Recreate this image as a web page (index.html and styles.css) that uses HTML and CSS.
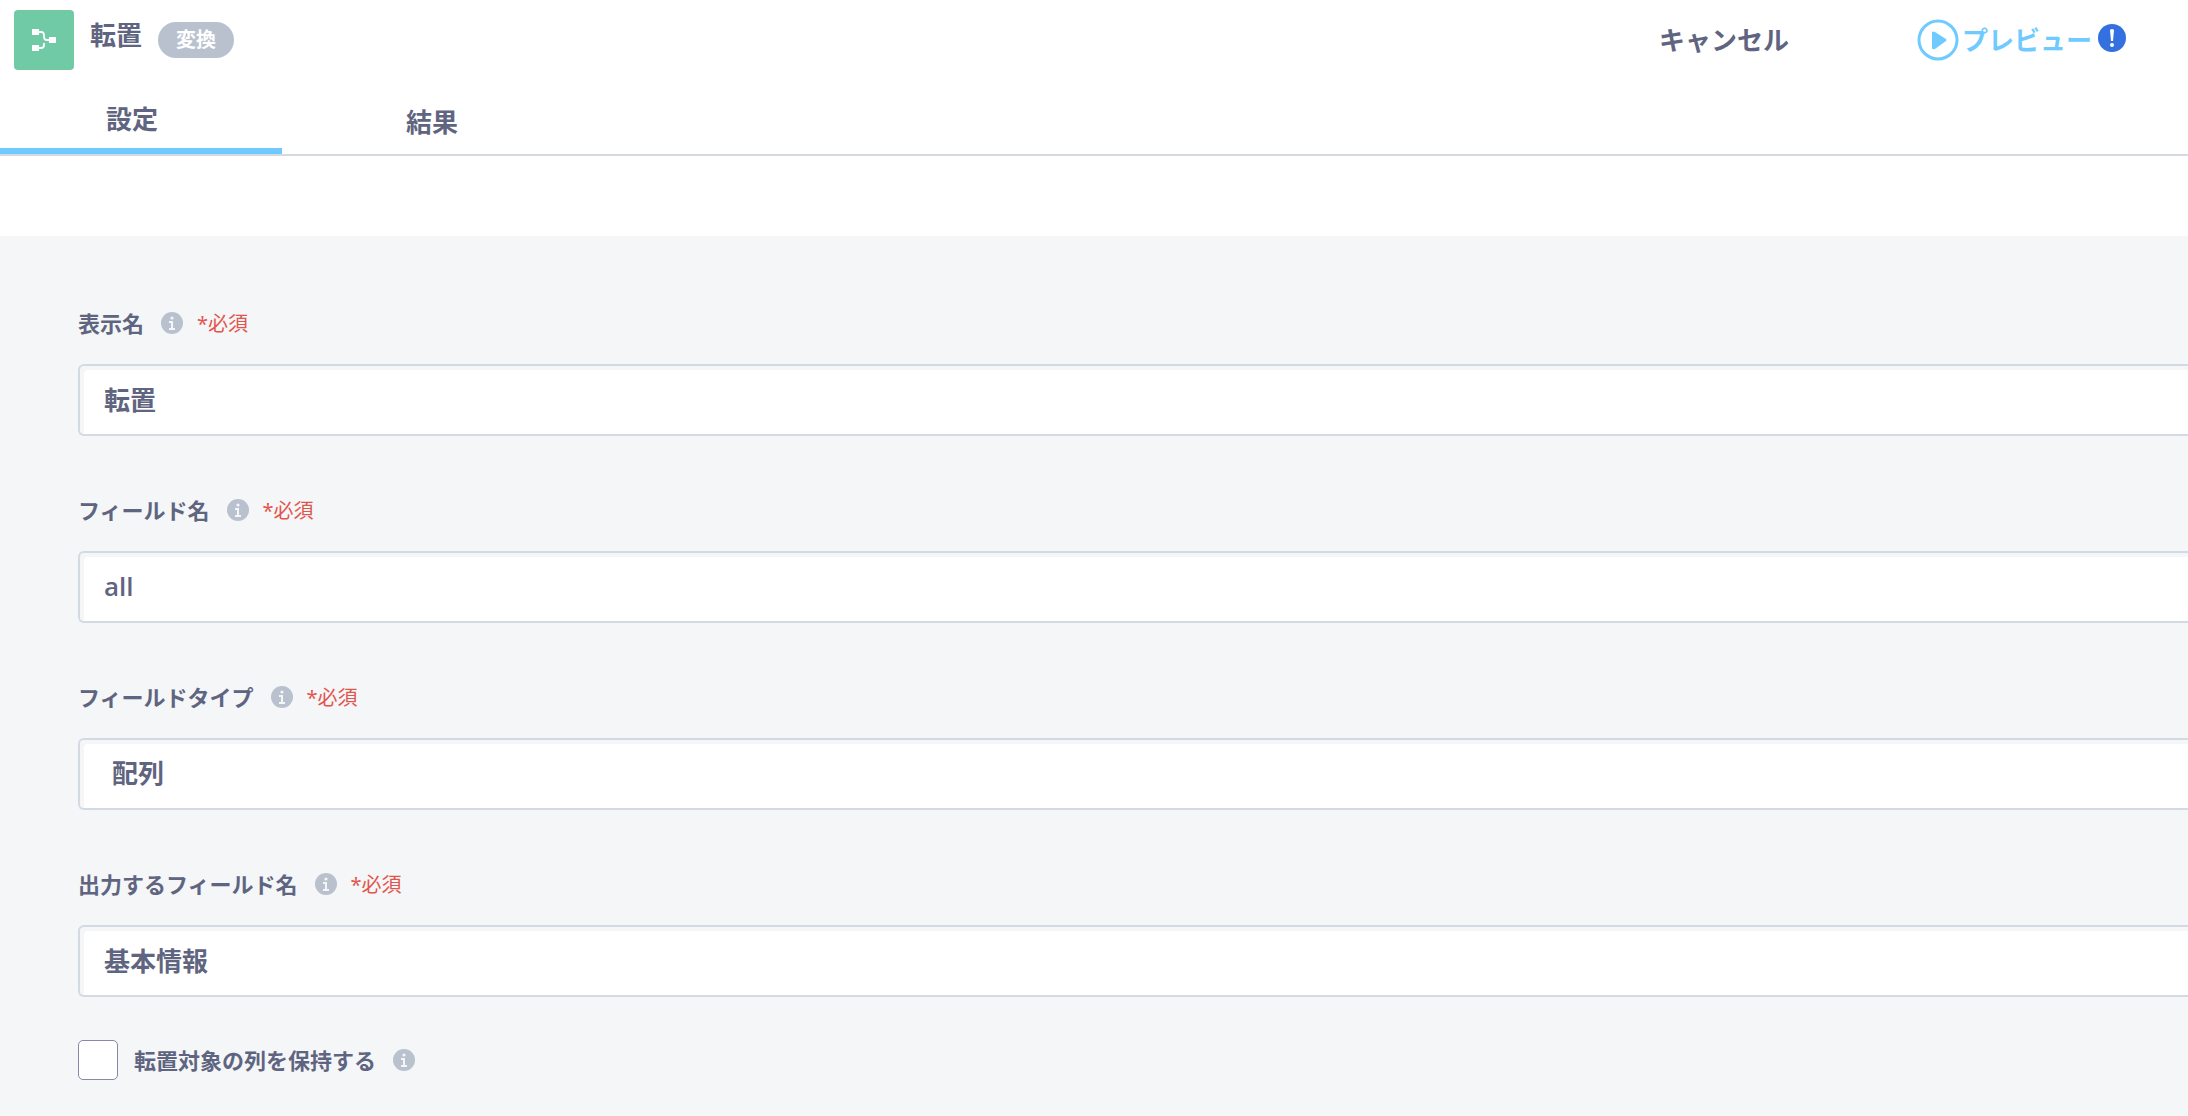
FILE: index.html
```
<!DOCTYPE html>
<html lang="ja">
<head>
    <meta charset="UTF-8">
    <meta name="viewport" content="width=device-width, initial-scale=1.0">
    <title>転置</title>
    <link rel="stylesheet" href="styles.css">
</head>
<body>
    <svg class="sprite" aria-hidden="true">
        <symbol id="info" viewBox="0 0 22 22">
            <circle cx="11" cy="11" r="11" fill="#b9c1cf"/>
            <path d="M8 9h4v7h2v2H8v-2h2v-5H8z" fill="#f4f6f8"/>
            <circle cx="11" cy="6" r="1.6" fill="#f4f6f8"/>
        </symbol>
    </svg>
    <header class="header">
        <div class="step-icon">
            <svg viewBox="0 0 60 60" width="60" height="60">
                <path d="M18 19h7v6h-7zM18 35h7v6h-7zM35 27h7v6h-7z" fill="#fff"/>
                <path d="M25 22h2q3 0 3 3v2q0 3 3 3h2M25 38h2q3 0 3-3v-2" fill="none" stroke="#fff" stroke-width="1.8"/>
            </svg>
        </div>
        <h1 class="title">転置</h1>
        <span class="tag">変換</span>
        <div class="actions">
            <button type="button" class="cancel-btn">キャンセル</button>
            <button type="button" class="preview-btn">
                <svg viewBox="0 0 42 42" width="42" height="42">
                    <circle cx="21" cy="21" r="19" fill="none" stroke="#6fcbff" stroke-width="3"/>
                    <path d="M15 13q0-1 3 0l11 7q1 1 0 2l-11 8q-3 1-3-1z" fill="#6fcbff"/>
                </svg>
                プレビュー
            </button>
            <svg class="alert" viewBox="0 0 28 28" width="28" height="28">
                <circle cx="14" cy="14" r="14" fill="#3370e0"/>
                <path d="M12 6q2-2 4 0l-1 11h-2z" fill="#fff"/>
                <circle cx="14" cy="21" r="2" fill="#fff"/>
            </svg>
        </div>
    </header>
    <nav class="tabs">
        <button type="button" class="tab active">設定</button>
        <button type="button" class="tab">結果</button>
    </nav>
    <form class="settings">
        <div class="field">
            <div class="field-head">
                <label for="displayName">表示名</label>
                <svg class="info"><use href="#info"/></svg>
                <span class="required">*必須</span>
            </div>
            <input type="text" class="control" id="displayName" value="転置">
        </div>
        <div class="field">
            <div class="field-head">
                <label for="fieldName">フィールド名</label>
                <svg class="info"><use href="#info"/></svg>
                <span class="required">*必須</span>
            </div>
            <input type="text" class="control" id="fieldName" value="all">
        </div>
        <div class="field">
            <div class="field-head">
                <label for="fieldType">フィールドタイプ</label>
                <svg class="info"><use href="#info"/></svg>
                <span class="required">*必須</span>
            </div>
            <select class="control select" id="fieldType">
                <option>配列</option>
            </select>
        </div>
        <div class="field">
            <div class="field-head">
                <label for="outputName">出力するフィールド名</label>
                <svg class="info"><use href="#info"/></svg>
                <span class="required">*必須</span>
            </div>
            <input type="text" class="control" id="outputName" value="基本情報">
        </div>
        <div class="check-row">
            <input type="checkbox" class="checkbox" id="keepColumns">
            <label for="keepColumns">転置対象の列を保持する</label>
            <svg class="info"><use href="#info"/></svg>
        </div>
    </form>
</body>
</html>
```
FILE: styles.css
```
* {
    box-sizing: border-box;
}
body {
    margin: 0;
    min-height: 100vh;
    display: flex;
    flex-direction: column;
    background: #fff;
    color: #5f6580;
    font-family: "Noto Sans", "Noto Sans CJK JP", sans-serif;
}
button, input, select {
    font-family: inherit;
    color: inherit;
}
button {
    padding: 0;
    border: none;
    background: none;
    cursor: pointer;
}
.sprite {
    display: none;
}
.header {
    display: flex;
    align-items: center;
    height: 80px;
    padding: 0 62px 0 14px;
}
.step-icon {
    width: 60px;
    height: 60px;
    border-radius: 4px;
    background: #70caa5;
}
.title {
    margin: 0 16px;
    padding-bottom: 10px;
    font-size: 26px;
    line-height: 36px;
    font-weight: 700;
}
.tag {
    padding: 0 18px;
    border-radius: 18px;
    background: #b9c1cf;
    color: #fff;
    font-size: 20px;
    line-height: 36px;
    font-weight: 700;
}
.actions {
    display: flex;
    align-items: center;
    margin-left: auto;
}
.cancel-btn, .preview-btn {
    font-size: 26px;
    line-height: 36px;
    font-weight: 700;
}
.cancel-btn {
    margin-right: 128px;
}
.preview-btn {
    display: flex;
    align-items: center;
    gap: 3px;
    color: #6fcbff;
}
.alert {
    margin: 0 0 4px 6px;
}
.tabs {
    display: flex;
    gap: 18px;
    height: 76px;
    border-bottom: 2px solid #d5d9e2;
}
.tab {
    width: 282px;
    padding: 10px 18px 0 0;
    font-size: 26px;
    line-height: 36px;
    font-weight: 700;
    text-align: center;
}
.tab.active {
    border-bottom: 6px solid #6fcbff;
}
.settings {
    flex: 1;
    margin-top: 80px;
    padding: 71px 0 32px 78px;
    background: #f4f6f8;
    overflow: hidden;
}
.field + .field {
    margin-top: 58px;
}
.field-head {
    display: flex;
    align-items: center;
    height: 32px;
    margin-bottom: 25px;
    font-size: 22px;
    font-weight: 700;
}
.field-head label, .required {
    padding-bottom: 2px;
}
.info {
    width: 22px;
    height: 22px;
    margin: 0 14px 0 17px;
}
.required {
    color: #e2554d;
    font-size: 20px;
    font-weight: 400;
}
.control {
    display: block;
    width: 100%;
    height: 72px;
    padding: 0 24px 2px;
    border: 2px solid #d3dae3;
    border-right: none;
    border-radius: 6px 0 0 6px;
    background: #fff;
    box-shadow: inset 4px 4px 0 #f4f6f8;
    font-family: "Open Sans", "Noto Sans CJK JP", sans-serif;
    font-size: 26px;
    font-weight: 600;
}
.select {
    appearance: none;
    padding-left: 32px;
}
.check-row {
    display: flex;
    align-items: center;
    margin-top: 43px;
    font-size: 22px;
    font-weight: 700;
}
.check-row label {
    padding-bottom: 2px;
}
.checkbox {
    appearance: none;
    width: 40px;
    height: 40px;
    margin: 0 16px 0 0;
    border: 1px solid #8589a6;
    border-radius: 5px;
    background: #fff;
}
```
